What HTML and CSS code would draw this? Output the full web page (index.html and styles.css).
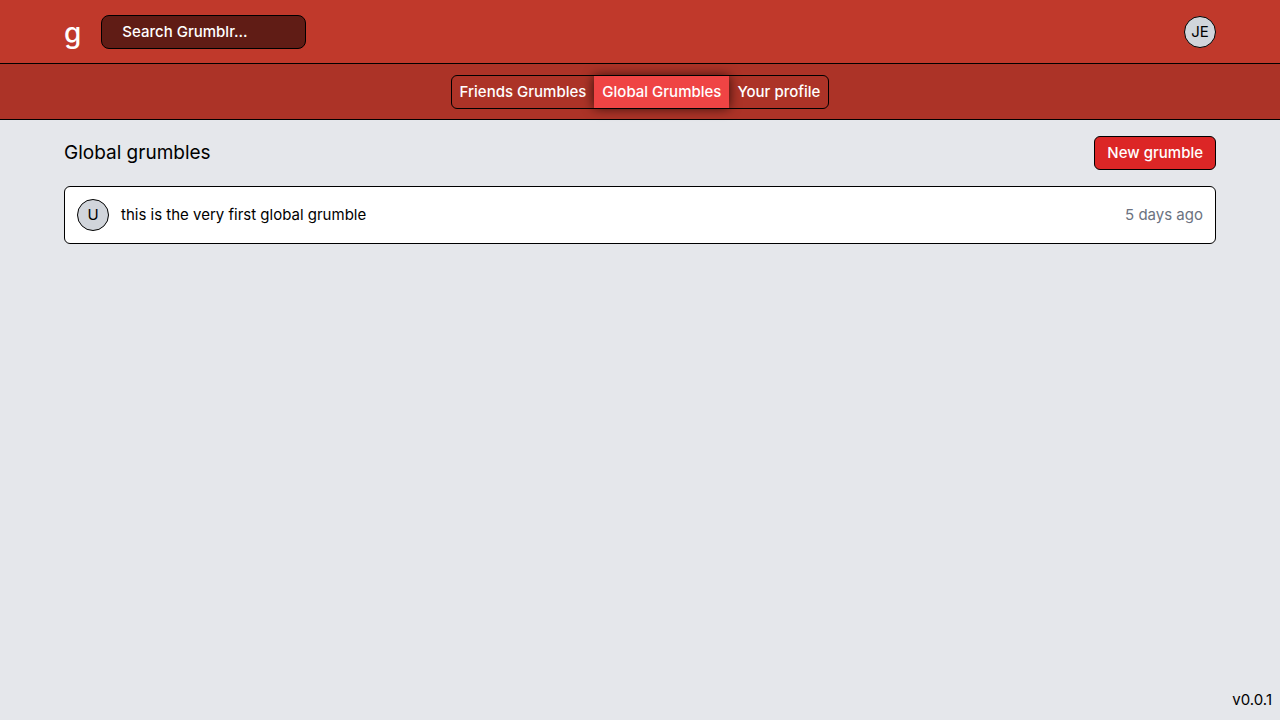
FILE: index.html
```html
<!DOCTYPE html>
<html lang="en">
<head>
<meta charset="utf-8">
<meta name="viewport" content="width=device-width, initial-scale=1">
<title>Grumblr</title>
<link rel="stylesheet" href="styles.css">
</head>
<body class="page">
<header class="topbar">
  <a class="brand" href="#">g</a>
  <input class="search" type="search" placeholder="Search Grumblr..." aria-label="Search Grumblr">
  <button class="avatar account" type="button" aria-label="Account JE">JE</button>
</header>
<nav class="subnav" aria-label="Feeds">
  <div class="tabs">
    <a class="tab" href="#">Friends Grumbles</a>
    <a class="tab tab-active" href="#" aria-current="page">Global Grumbles</a>
    <a class="tab" href="#">Your profile</a>
  </div>
</nav>
<main class="content">
  <div class="heading">
    <h1 class="title">Global grumbles</h1>
    <button class="new" type="button">New grumble</button>
  </div>
  <article class="grumble">
    <span class="avatar">U</span>
    <p class="message">this is the very first global grumble</p>
    <time class="time">5 days ago</time>
  </article>
</main>
<footer class="version">v0.0.1</footer>
</body>
</html>
```
FILE: styles.css
```css
* { box-sizing: border-box; }

.page {
  display: flex;
  flex-direction: column;
  min-height: 100vh;
  margin: 0;
  background: #e5e7eb;
  color: #000;
  font-family: Inter, "Liberation Sans", sans-serif;
  font-size: 15px;
  line-height: 24px;
}

.topbar {
  display: flex;
  align-items: center;
  height: 64px;
  padding: 0 64px;
  background: #c0392b;
  border-bottom: 1px solid #000;
}

.brand {
  margin-right: 20px;
  padding-top: 2px;
  color: #fff;
  font-size: 28px;
  font-weight: 500;
  line-height: 36px;
  text-decoration: none;
}

.search {
  width: 205px;
  height: 34px;
  padding: 0 20px;
  border: 1px solid #000;
  border-radius: 8px;
  background: #601c15;
  color: #fff;
  font: inherit;
  font-weight: 500;
  appearance: none;
}

.search::placeholder { color: #fff; opacity: 1; }

.avatar {
  display: flex;
  align-items: center;
  justify-content: center;
  flex: none;
  width: 32px;
  height: 32px;
  padding: 0;
  border: 1px solid #000;
  border-radius: 50%;
  background: #d1d5db;
  color: #000;
  font: inherit;
}

.account { margin-left: auto; }

.subnav {
  display: flex;
  align-items: center;
  justify-content: center;
  height: 56px;
  background: #ac3327;
  border-bottom: 1px solid #000;
}

.tabs {
  display: flex;
  border: 1px solid #000;
  border-radius: 6px;
}

.tab {
  padding: 4px 8px;
  color: #fff;
  font-weight: 500;
  text-decoration: none;
}

.tab-active {
  background: #ef4444;
  box-shadow: 0 0 12px rgba(0, 0, 0, 0.75);
}

.content {
  flex: 1;
  padding: 16px 64px;
}

.heading {
  display: flex;
  align-items: center;
  justify-content: space-between;
  margin-bottom: 16px;
}

.title {
  margin: 0;
  font-size: 19px;
  font-weight: 400;
  line-height: 28px;
}

.new {
  padding: 4px 12px;
  border: 1px solid #000;
  border-radius: 6px;
  background: #dc2626;
  color: #fff;
  font: inherit;
  font-weight: 500;
}

.grumble {
  display: flex;
  align-items: center;
  gap: 12px;
  padding: 12px;
  border: 1px solid #000;
  border-radius: 6px;
  background: #fff;
}

.message { flex: 1; margin: 0; }

.time { color: #6b7280; }

.version {
  padding: 8px;
  text-align: right;
}
```
